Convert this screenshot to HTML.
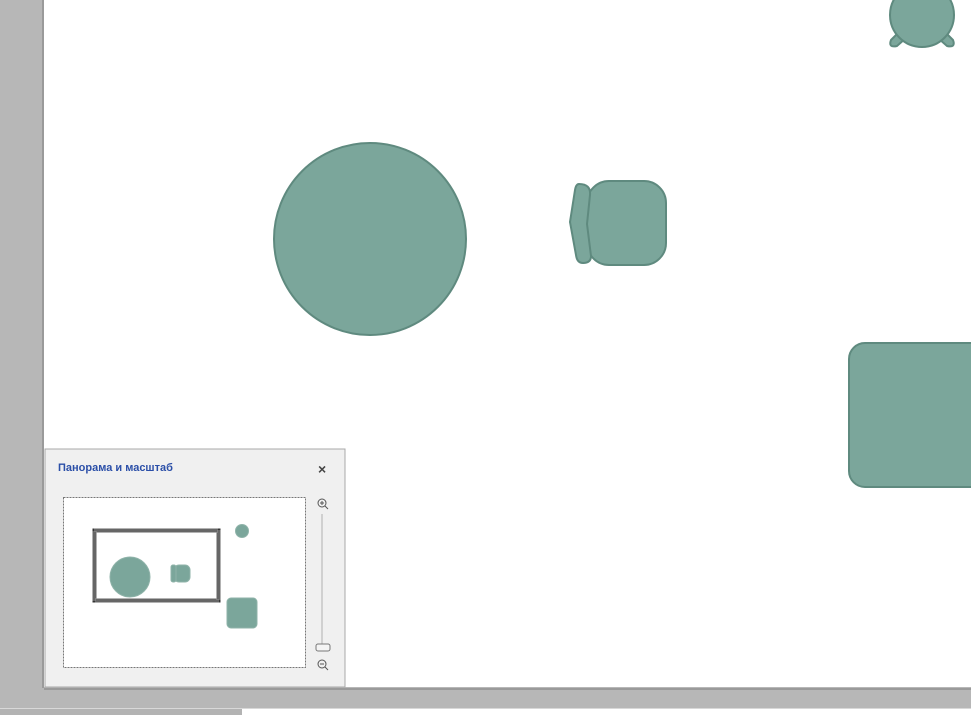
<!DOCTYPE html>
<html><head><meta charset="utf-8"><style>
html,body{margin:0;padding:0;width:971px;height:715px;overflow:hidden;background:#b7b7b7;font-family:"Liberation Sans",sans-serif}
</style></head><body>
<svg width="971" height="715" xmlns="http://www.w3.org/2000/svg" style="position:absolute;left:0;top:0">
<rect x="0" y="0" width="971" height="715" fill="#b7b7b7"/>
<rect x="44" y="688" width="927" height="2" fill="#9a9a9a"/>
<rect x="42" y="0" width="2" height="688" fill="#9a9a9a"/>
<rect x="44" y="0" width="927" height="687" fill="#fff"/>
<rect x="0" y="708" width="971" height="1" fill="#d8d8d8"/>
<rect x="0" y="709" width="242" height="6" fill="#b3b3b3"/>
<rect x="242" y="709" width="729" height="6" fill="#fff"/>
<g fill="#7ba69b" stroke="#5f8a7f" stroke-width="2">
<circle cx="370" cy="239" r="96"/>
<rect x="587" y="181" width="79" height="84" rx="22"/>
<path d="M579 184 Q591 184 590 195 L587 224 L591 256 Q591 263 583 263 Q577 263 576 255 L570 222 L575 190 Q576 184 579 184Z"/>
<rect x="849" y="343" width="140" height="144" rx="16"/>
<path d="M891 40 L900 31 L906 38 L897 46 Q888 48 891 40Z"/>
<path d="M953 40 L944 31 L938 38 L947 46 Q956 48 953 40Z"/>
<circle cx="922" cy="15" r="32"/>
</g>
<rect x="45" y="449" width="300" height="238" fill="#f0f0f0" stroke="#a8a8a8"/>
<text x="58" y="471" font-size="11" font-weight="bold" fill="#2b4fa8" font-family="Liberation Sans, sans-serif">Панорама и масштаб</text>
<text x="318" y="474" font-size="14" font-weight="bold" fill="#444">×</text>
<rect x="63.5" y="497.5" width="242" height="170" fill="#fff" stroke="#777" stroke-dasharray="2,1"/>
<rect x="94.5" y="530.5" width="124" height="70" fill="none" stroke="#333" stroke-width="4"/>
<rect x="94.5" y="530.5" width="124" height="70" fill="none" stroke="#fff" stroke-width="4" stroke-dasharray="1,1" opacity="0.5"/>
<g fill="#7ba69b" stroke="#8fb3a9" stroke-width="1">
<circle cx="130" cy="577" r="20"/>
<rect x="174" y="565" width="16" height="17" rx="5"/>
<rect x="171" y="565" width="5" height="17" rx="2"/>
<circle cx="242" cy="531" r="6.5"/>
<rect x="227" y="598" width="30" height="30" rx="4"/>
</g>
<rect x="321" y="514" width="2" height="132" fill="#d0d0d0"/>
<rect x="316" y="644" width="14" height="7" rx="2" fill="#f4f4f4" stroke="#777"/>
<g fill="none" stroke="#555" stroke-width="1">
<circle cx="322" cy="503" r="4"/><line x1="325" y1="506" x2="328" y2="509"/><line x1="320" y1="503" x2="324" y2="503"/><line x1="322" y1="501" x2="322" y2="505"/>
<circle cx="322" cy="664" r="4"/><line x1="325" y1="667" x2="328" y2="670"/><line x1="320" y1="664" x2="324" y2="664"/>
</g>
</svg>
</body></html>
